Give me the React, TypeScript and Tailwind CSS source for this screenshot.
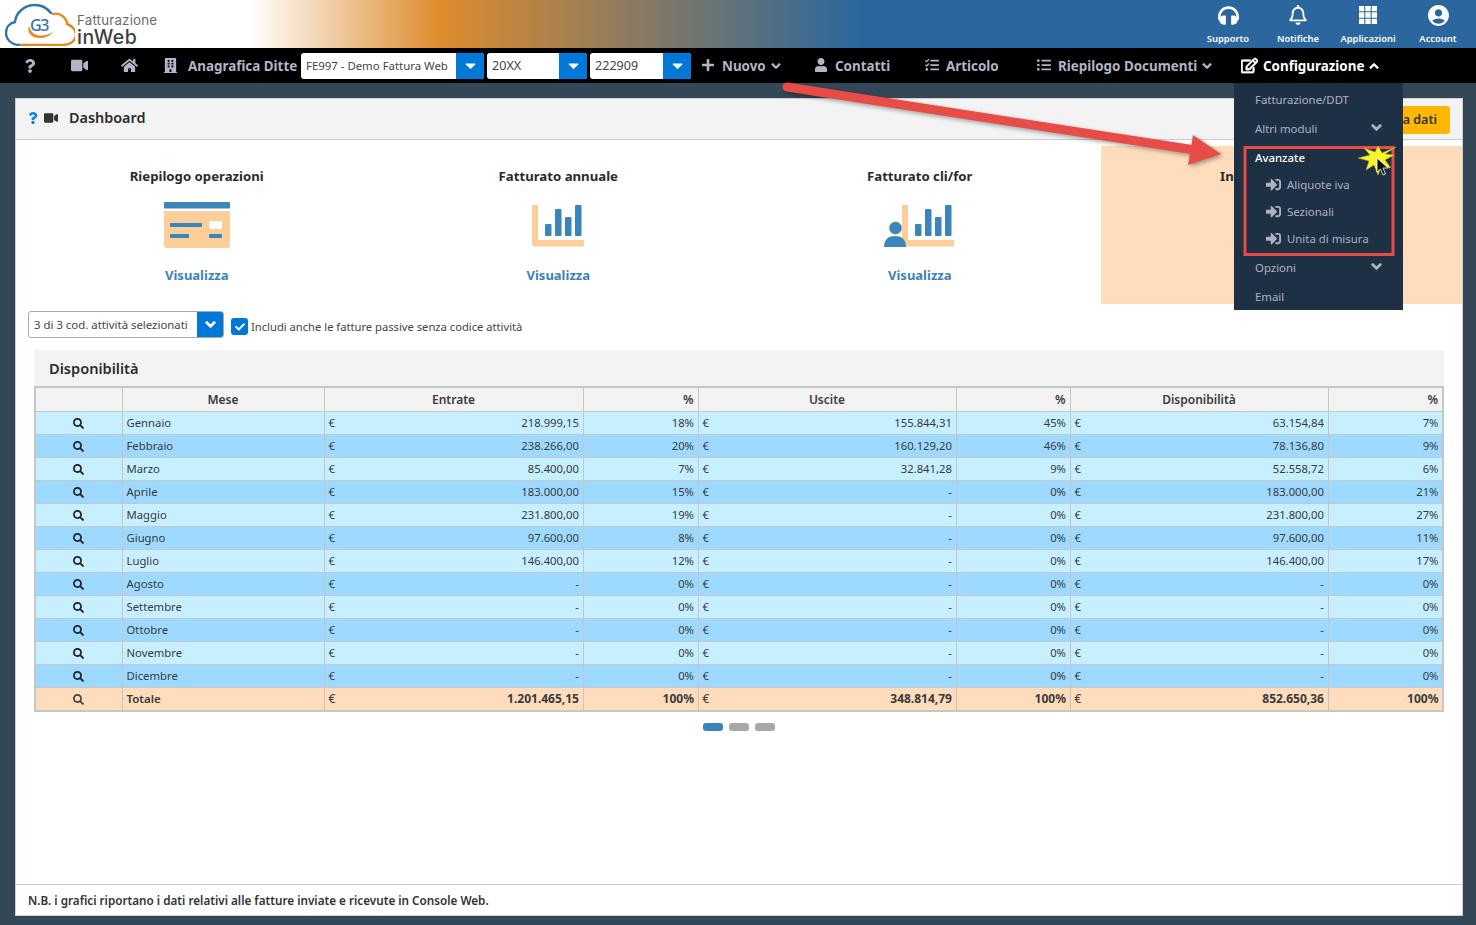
import React from "react";
import { FaHeadphones, FaRegBell, FaQuestion, FaVideo, FaHome, FaBuilding, FaPlus, FaChevronDown, FaChevronUp, FaUser, FaListUl, FaRegEdit, FaSignInAlt, FaSearch, FaCheck, FaCaretDown, FaTasks } from "react-icons/fa";
import { MdAccountCircle } from "react-icons/md";
import { TfiLayoutGrid3Alt } from "react-icons/tfi";

const rows = [
  ["Gennaio", "218.999,15", "18%", "155.844,31", "45%", "63.154,84", "7%"],
  ["Febbraio", "238.266,00", "20%", "160.129,20", "46%", "78.136,80", "9%"],
  ["Marzo", "85.400,00", "7%", "32.841,28", "9%", "52.558,72", "6%"],
  ["Aprile", "183.000,00", "15%", "-", "0%", "183.000,00", "21%"],
  ["Maggio", "231.800,00", "19%", "-", "0%", "231.800,00", "27%"],
  ["Giugno", "97.600,00", "8%", "-", "0%", "97.600,00", "11%"],
  ["Luglio", "146.400,00", "12%", "-", "0%", "146.400,00", "17%"],
  ["Agosto", "-", "0%", "-", "0%", "-", "0%"],
  ["Settembre", "-", "0%", "-", "0%", "-", "0%"],
  ["Ottobre", "-", "0%", "-", "0%", "-", "0%"],
  ["Novembre", "-", "0%", "-", "0%", "-", "0%"],
  ["Dicembre", "-", "0%", "-", "0%", "-", "0%"],
];
const total = ["Totale", "1.201.465,15", "100%", "348.814,79", "100%", "852.650,36", "100%"];

function Logo() {
  return (
    <div className="flex items-start pl-[5px]">
      <div className="relative w-[70px] h-[46px] mt-[2px]">
        <svg width="70" height="44" viewBox="0 0 70 44" fill="none">
          <path d="M15 43 C6 43 1 37 1 31 C1 25 5 21 10 20 C11 10 20 3 30 3 C37 3 42 6 46 11" stroke="#2f74ab" strokeWidth="2.4" strokeLinecap="round" />
          <path d="M48 12 C56 10 62 17 62 22 C68 24 71 29 71 33 C70 40 64 43 58 43 L16 43" stroke="#e8871e" strokeWidth="2.4" strokeLinecap="round" />
          <path d="M24 24 C21 31 28 37 37 36 C43 35 47 32 49 29 C45 33 34 36 28 31 C26 29 25 27 24 24Z" fill="#e8871e" />
        </svg>
        <span className="absolute left-[25px] top-[13px] text-[16px] leading-[20px] font-medium text-[#2f74ab] tracking-[-1.5px] font-['Noto_Sans',sans-serif]">G3</span>
      </div>
      <div className="flex flex-col ml-[2px] mt-[13px]">
        <span className="text-[13.3px] leading-[15px] text-[#6b6b6b] font-['Inter',sans-serif] tracking-[0.2px]">Fatturazione</span>
        <span className="text-[19.5px] leading-[19px] text-[#3f3f3f] font-medium font-['Inter',sans-serif] tracking-[0.5px]">inWeb</span>
      </div>
    </div>
  );
}

function TopIcon({ icon, label }: { icon: React.ReactNode; label: string }) {
  return (
    <div className="w-[70px] flex flex-col items-center text-white">
      <div className="h-[30px] flex items-center justify-center">{icon}</div>
      <span className="text-[9.4px] leading-[13px] font-semibold whitespace-nowrap mt-[2px]">{label}</span>
    </div>
  );
}

function Combo({ text, w, mono }: { text: string; w: string; mono?: boolean }) {
  return (
    <div className={`flex h-[26px] rounded-[3px] overflow-hidden bg-white ${w}`}>
      <span className={`flex-1 pl-[5px] leading-[26px] text-[#444] whitespace-nowrap overflow-hidden ${mono ? "text-[12.6px]" : "text-[11.4px]"}`}>{text}</span>
      <span className="w-[28px] bg-[#0078d7] flex items-center justify-center text-white"><FaCaretDown size={17} /></span>
    </div>
  );
}

function Chev({ up, size = 10, cls = "" }: { up?: boolean; size?: number; cls?: string }) {
  const C = up ? FaChevronUp : FaChevronDown;
  return <C size={size} className={cls} stroke="currentColor" strokeWidth={50} />;
}

function NavItem({ icon, label, cls, chevron, active }: { icon: React.ReactNode; label: string; cls: string; chevron?: "up" | "down"; active?: boolean }) {
  return (
    <div className={`flex items-center text-[13.4px] font-bold whitespace-nowrap ${active ? "text-white" : "text-[#b4b4c6]"} ${cls}`}>
      <span className="w-[14px] flex justify-center mr-[7px]">{icon}</span>
      <span className="pt-[1px]">{label}</span>
      {chevron === "down" && <Chev cls="ml-[5px] mt-[2px]" />}
      {chevron === "up" && <Chev up cls="ml-[5px] mt-[1px]" />}
    </div>
  );
}

function Card1() {
  return (
    <svg width="66" height="46" viewBox="0 0 66 46">
      <rect x="0" y="0" width="66" height="6.5" rx="1" fill="#3a86ba" />
      <path d="M0 9 H66 V43 a3 3 0 0 1 -3 3 H3 a3 3 0 0 1 -3 -3Z" fill="#fccf9a" />
      <rect x="6" y="21" width="32" height="4" rx="1" fill="#3a86ba" />
      <rect x="45" y="19" width="13" height="8" rx="2" fill="#fff" />
      <rect x="6" y="32" width="19" height="4" rx="1" fill="#3a86ba" />
      <rect x="45" y="32" width="13" height="4" rx="1" fill="#3a86ba" />
    </svg>
  );
}
function Bars() {
  return (
    <>
      <path d="M0 0 H6 V35 H52 V40 a1.5 1.5 0 0 1 -1.5 1.5 H3 a3 3 0 0 1 -3 -3Z" fill="#fccf9a" />
      <rect x="13" y="19" width="6.5" height="12" rx="1" fill="#3a86ba" />
      <rect x="23" y="4" width="6.5" height="27" rx="1" fill="#3a86ba" />
      <rect x="33" y="12" width="6.5" height="19" rx="1" fill="#3a86ba" />
      <rect x="43" y="0" width="6.5" height="31" rx="1" fill="#3a86ba" />
    </>
  );
}
function Card2() {
  return <svg width="53" height="42" viewBox="0 0 53 42" className="mt-[3px]"><Bars /></svg>;
}
function Card3() {
  return (
    <svg width="71" height="43" viewBox="0 0 71 43" className="mt-[3px]">
      <g transform="translate(18 0)"><Bars /></g>
      <circle cx="11.5" cy="23" r="6.5" fill="#3a86ba" stroke="#fde3ca" strokeWidth="0.5" />
      <path d="M0 42 C0 34 5 31 11 31 C17 31 22 34 22 42Z" fill="#3a86ba" />
    </svg>
  );
}

function Tile({ title, icon, hl }: { title: string; icon?: React.ReactNode; hl?: boolean }) {
  return (
    <div className={`h-[158px] flex flex-col items-center pt-[21px] ${hl ? "bg-[#fedcbc]" : ""}`}>
      <span className="text-[13.2px] leading-[18px] font-bold text-[#2b2b2b] whitespace-nowrap">{title}</span>
      <div className="h-[52px] mt-[17px] flex items-start">{icon}</div>
      <span className="mt-[12px] text-[13px] leading-[18px] font-bold text-[#3d82b8]">Visualizza</span>
    </div>
  );
}

const cellB = "border border-[#c6c6c6]";
function Row({ r, bg, bold }: { r: string[]; bg: string; bold?: boolean }) {
  const num = `pl-[4px] pr-[3.5px] ${cellB}`;
  return (
    <tr className={`${bold ? "h-[24px] font-bold text-[12px]" : "h-[23px]"} ${bg} text-[#3a3a3a]`}>
      <td className={`${cellB} text-center`}><FaSearch size={11} className={`inline-block ${bold ? "text-[#444]" : "text-[#222]"}`} /></td>
      <td className={`${cellB} px-[4px] ${bold ? "pt-[1px]" : ""}`}>{bold ? <span className="font-semibold text-[11.5px]">{r[0]}</span> : r[0]}</td>
      {[1, 3, 5].map((i) => (
        <React.Fragment key={i}>
          <td className={`${num} ${bold ? "pt-[1px]" : ""}`}><div className="flex justify-between"><span className="font-normal">€</span><span>{r[i]}</span></div></td>
          <td className={`${num} text-right ${bold ? "pt-[1px]" : ""}`}>{r[i + 1]}</td>
        </React.Fragment>
      ))}
    </tr>
  );
}

function MenuRow({ label, chev, active }: { label: string; chev?: boolean; active?: boolean }) {
  return (
    <div className={`h-[29px] pl-[21px] pr-[21px] flex items-center justify-between text-[11.4px] ${active ? "text-white font-medium" : "text-[#b0b0c0]"}`}>
      <span>{label}</span>
      {chev && <Chev size={11} cls="-mt-[3px]" />}
    </div>
  );
}
function SubRow({ label }: { label: string }) {
  return (
    <div className="h-[27px] pl-[32px] flex items-center text-[11.4px] text-[#b0b0c0]">
      <FaSignInAlt size={15} className="mr-[6px]" />
      <span>{label}</span>
    </div>
  );
}

export default function App() {
  return (
    <div className="relative h-screen w-full overflow-hidden flex flex-col bg-[#344756] font-['Noto_Sans',sans-serif]">
      <header className="h-[48px] flex items-start justify-between bg-[linear-gradient(90deg,#fff_250px,#de8b2c_440px,#2b679e_860px)]">
        <Logo />
        <div className="flex items-start pr-[3px]">
          <TopIcon label="Supporto" icon={<FaHeadphones size={21} />} />
          <TopIcon label="Notifiche" icon={<FaRegBell size={20} />} />
          <TopIcon label="Applicazioni" icon={<TfiLayoutGrid3Alt size={18} />} />
          <TopIcon label="Account" icon={<MdAccountCircle size={25} />} />
        </div>
      </header>

      <nav className="h-[35px] bg-black flex items-center">
        <FaQuestion size={14} className="ml-[23px] text-[#b4b4c6]" />
        <FaVideo size={17} className="ml-[34px] text-[#b4b4c6]" />
        <FaHome size={17} className="ml-[33px] text-[#b4b4c6]" />
        <FaBuilding size={15} className="ml-[25px] text-[#b4b4c6]" />
        <span className="ml-[10px] pt-[1px] text-[13.4px] font-bold text-[#b4b4c6] whitespace-nowrap w-[113px]">Anagrafica Ditte</span>
        <Combo text="FE997 - Demo Fattura Web" w="w-[183px]" />
        <Combo text="20XX" w="w-[100px] ml-[3px]" mono />
        <Combo text="222909" w="w-[101px] ml-[3px]" mono />
        <NavItem cls="ml-[10px] w-[90px]" label="Nuovo" chevron="down" icon={<FaPlus size={14} />} />
        <NavItem cls="ml-[23px] w-[90px]" label="Contatti" icon={<FaUser size={14} />} />
        <NavItem cls="ml-[21px] w-[90px]" label="Articolo" icon={<FaTasks size={14} />} />
        <NavItem cls="ml-[22px] w-[190px]" label="Riepilogo Documenti" chevron="down" icon={<FaListUl size={14} />} />
        <NavItem cls="ml-[15px]" active label="Configurazione" chevron="up" icon={<FaRegEdit size={17} stroke="currentColor" strokeWidth={25} className="shrink-0" />} />
      </nav>

      <main className="flex-1 ml-[15px] mr-[13px] mt-[15px] mb-[9px] bg-white flex flex-col min-h-0 border border-[#cfcfcf]">
        <div className="h-[41px] shrink-0 bg-[#f3f3f3] border-b border-[#cccccc] flex items-center justify-between pl-[11px] pr-[12px]">
          <div className="flex items-center mb-[2px]">
            <FaQuestion size={12} className="text-[#0a7fdc]" />
            <FaVideo size={14} className="ml-[5px] text-[#333]" />
            <span className="ml-[11px] text-[14.4px] font-semibold text-[#2b2b2b]">Dashboard</span>
          </div>
          <button className="h-[28px] mt-[2px] pt-[1px] px-[13px] rounded-[3px] bg-[#ffb703] text-[12.5px] font-semibold text-[#333] whitespace-nowrap">Aggiorna dati</button>
        </div>

        <div className="grid grid-cols-4 mt-[6px] shrink-0">
          <Tile title="Riepilogo operazioni" icon={<Card1 />} />
          <Tile title="Fatturato annuale" icon={<Card2 />} />
          <Tile title="Fatturato cli/for" icon={<Card3 />} />
          <Tile title="Incassi/pagamenti" hl />
        </div>

        <div className="flex items-start pl-[12px] mt-[7px] shrink-0">
          <div className="flex h-[27px] w-[196px] border border-[#aaa] rounded-[3px] overflow-hidden">
            <span className="flex-1 pl-[5px] text-[11.4px] leading-[25px] text-[#444] whitespace-nowrap overflow-hidden">3 di 3 cod. attività selezionati</span>
            <span className="w-[26px] bg-[#0078d7] flex items-center justify-center text-white"><Chev size={11} /></span>
          </div>
          <span className="ml-[7px] mt-[7px] w-[17px] h-[17px] rounded-[3px] bg-[#0078d7] flex items-center justify-center text-white"><FaCheck size={10} /></span>
          <span className="ml-[3px] mt-[8px] text-[11.2px] leading-[16px] text-[#444] whitespace-nowrap">Includi anche le fatture passive senza codice attività</span>
        </div>

        <section className="mx-[18px] mt-[12px] shrink-0 bg-[#f3f3f3]">
          <div className="h-[36px] pl-[15px] pt-[1px] flex items-center text-[14.6px] font-semibold text-[#2b2b2b]">Disponibilità</div>
          <div className="bg-white">
            <table className="w-[1408px] table-fixed border-collapse border-2 border-[#c6c6c6] text-[11.3px] leading-[16px]">
              <colgroup>
                {[87, 202, 259, 115, 258, 114, 258, 115].map((w, i) => <col key={i} style={{ width: w }} />)}
              </colgroup>
              <thead>
                <tr className="h-[24px] bg-[#f3f3f3] text-[#3a3a3a] font-bold text-[12px]">
                  <th className={cellB}></th>
                  <th className={`${cellB} font-semibold pt-[1px]`}>Mese</th>
                  <th className={`${cellB} font-semibold pt-[1px]`}>Entrate</th>
                  <th className={`${cellB} font-semibold pt-[1px] text-right px-[4px]`}>%</th>
                  <th className={`${cellB} font-semibold pt-[1px]`}>Uscite</th>
                  <th className={`${cellB} font-semibold pt-[1px] text-right px-[4px]`}>%</th>
                  <th className={`${cellB} font-semibold pt-[1px]`}>Disponibilità</th>
                  <th className={`${cellB} font-semibold pt-[1px] text-right px-[4px]`}>%</th>
                </tr>
              </thead>
              <tbody>
                {rows.map((r, i) => <Row key={r[0]} r={r} bg={i % 2 ? "bg-[#9edaff]" : "bg-[#c6f0ff]"} />)}
                <Row r={total} bg="bg-[#fedcbc]" bold />
              </tbody>
            </table>
          </div>
        </section>

        <div className="flex justify-center gap-[6px] mt-[11px] shrink-0">
          <span className="w-[20px] h-[8px] rounded-[3px] bg-[#3a86ba]" />
          <span className="w-[20px] h-[8px] rounded-[3px] bg-[#a8a8a8]" />
          <span className="w-[20px] h-[8px] rounded-[3px] bg-[#a8a8a8]" />
        </div>

        <footer className="mt-auto h-[31px] shrink-0 border-t border-[#cccccc] flex items-center pl-[12px] pt-[1px] text-[11.7px] font-semibold text-[#333]">
          N.B. i grafici riportano i dati relativi alle fatture inviate e ricevute in Console Web.
        </footer>
      </main>

      {/* open dropdown */}
      <div className="absolute left-[1234px] top-[83px] w-[169px] h-[227px] bg-[#1e3144] pt-[2px]">
        <MenuRow label="Fatturazione/DDT" />
        <MenuRow label="Altri moduli" chev />
        <MenuRow label="Avanzate" active />
        <div className="-mt-[1px]">
          <SubRow label="Aliquote iva" />
          <SubRow label="Sezionali" />
          <SubRow label="Unita di misura" />
        </div>
        <div className="h-[1px]" />
        <MenuRow label="Opzioni" chev />
        <MenuRow label="Email" />
      </div>

      {/* annotations */}
      <svg className="absolute left-0 top-0 pointer-events-none drop-shadow-[2px_2px_2px_rgba(0,0,0,0.35)]" width="1476" height="925" viewBox="0 0 1476 925">
        <path d="M787 87 L1195 150" stroke="#e84c47" strokeWidth="9" strokeLinecap="round" fill="none" />
        <path d="M1193 135 L1221 154 L1188 165Z" fill="#e84c47" />
      </svg>
      <svg className="absolute left-0 top-0 pointer-events-none" width="1476" height="925" viewBox="0 0 1476 925">
        <rect x="1245" y="147.5" width="148" height="107" fill="none" stroke="#e84c47" strokeWidth="3" />
        <path d="M1396 147 L1382 153 L1378 146 L1375 152 L1364 148 L1370 155 L1358 158 L1369 161 L1366 170 L1374 165 L1378 175 L1381 166 L1391 168 L1385 160 L1394 155 L1385 154Z" fill="#f7f52b" stroke="#b9a92a" strokeWidth="0.5" />
        <path d="M1377 158 L1377 172 L1380.5 169 L1383 175 L1385.5 174 L1383 168 L1388 168Z" fill="#111" stroke="#fff" strokeWidth="0.8" />
      </svg>
    </div>
  );
}
